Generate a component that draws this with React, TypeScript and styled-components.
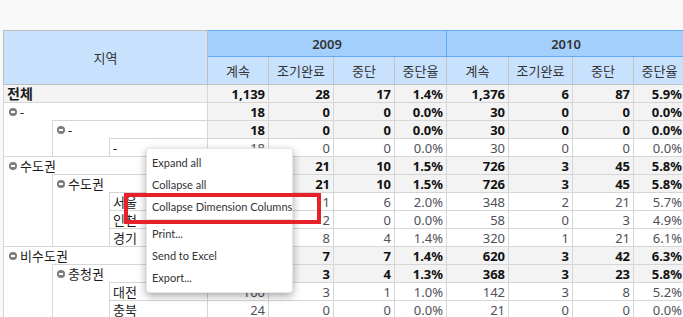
import React from 'react';
import styled, { createGlobalStyle, css } from 'styled-components';

const GlobalStyle = createGlobalStyle`
  html, body {
    margin: 0;
    padding: 0;
    background: #f8f8f8;
  }
  body {
    font-family: "Noto Sans", "Noto Sans CJK KR", sans-serif;
    overflow: hidden;
  }
`;

const Page = styled.div`
  position: relative;
  width: 683px;
  height: 317px;
  overflow: hidden;
  box-sizing: border-box;
  padding: 30px 0 0 3px;
`;

const PivotTable = styled.table`
  border-collapse: collapse;
  table-layout: fixed;
  width: 682px;
  font-size: 13px;
  background: #fff;
`;

const HeaderRow = styled.tr<{ $h: number }>`
  height: ${(p) => p.$h}px;
`;

const BodyRow = styled.tr`
  height: 18px;
`;

const headBase = css`
  padding: 0;
  font-weight: normal;
  color: #333;
  text-align: center;
  white-space: nowrap;
  line-height: 16px;
`;

const RegionHeader = styled.th`
  ${headBase};
  background: #c8e2fd;
  border: 1px solid #bdbdbd;
`;

const YearHeader = styled.th`
  ${headBase};
  background: #a3cffd;
  border: 1px solid #62aaf0;
  font-weight: 600;
`;

const MeasureHeader = styled.th`
  ${headBase};
  background: #c8e2fd;
  border: 1px solid #c3c3c3;
`;

const DimCell = styled.td<{ $total?: boolean; $pad: number }>`
  padding: 0 0 0 ${(p) => p.$pad}px;
  border: 1px solid #d6d6d6;
  background: ${(p) => (p.$total ? '#f3f3f3' : '#fff')};
  color: #1c1c1c;
  font-weight: ${(p) => (p.$total ? 'bold' : 'normal')};
  font-size: ${(p) => (p.$total ? '14px' : '13px')};
  line-height: 16px;
  white-space: nowrap;
  overflow: hidden;
`;

/* empty column under an expanded member; no rule on top so it joins its parent */
const SpacerCell = styled.td`
  padding: 0;
  border: 1px solid #d6d6d6;
  border-top-style: hidden;
  background: #fff;
`;

const ValueCell = styled.td<{ $sum?: boolean }>`
  padding: 0 3px 0 0;
  border: 1px solid #d6d6d6;
  text-align: right;
  line-height: 16px;
  white-space: nowrap;
  background: ${(p) => (p.$sum ? '#f3f3f3' : '#fff')};
  color: ${(p) => (p.$sum ? '#111' : '#505058')};
  font-weight: ${(p) => (p.$sum ? 'bold' : 'normal')};
`;

const Label = styled.span`
  display: inline-flex;
  align-items: center;
  gap: 3px;
`;

const CollapseIcon = styled.span`
  position: relative;
  display: inline-block;
  width: 8px;
  height: 8px;
  border-radius: 50%;
  background: #7b7b7b;
  &::after {
    content: '';
    position: absolute;
    left: 2px;
    top: 3px;
    width: 4px;
    height: 2px;
    background: #fff;
  }
`;

const ContextMenu = styled.div`
  position: absolute;
  left: 146px;
  top: 148px;
  width: 147px;
  box-sizing: border-box;
  padding: 3px 0;
  background: #fff;
  border: 1px solid rgba(0, 0, 0, 0.1);
  border-radius: 4px;
  box-shadow: 0 3px 8px rgba(0, 0, 0, 0.35);
  z-index: 2;
`;

const MenuItem = styled.div`
  height: 22px;
  line-height: 22px;
  padding: 0 5px;
  font-family: Lato, "Noto Sans", sans-serif;
  font-size: 11px;
  color: #333;
  white-space: nowrap;
`;

const MenuDivider = styled.div`
  height: 1px;
  margin: 1px 0 3px;
  background: #e2e2e2;
`;

const Highlight = styled.div`
  position: absolute;
  left: 124px;
  top: 193px;
  width: 197px;
  height: 31px;
  box-sizing: border-box;
  border: 4px solid #e8202a;
  z-index: 3;
`;

type Level = 0 | 1 | 2 | 3;

interface PivotRow {
  level: Level;
  label: string;
  spacers: number[]; // rowSpan of each empty column cell opened on this row
  values: string[];
}

const rows: PivotRow[] = [
  { level: 0, label: '전체', spacers: [], values: ['1,139', '28', '17', '1.4%', '1,376', '6', '87', '5.9%'] },
  { level: 1, label: '-', spacers: [], values: ['18', '0', '0', '0.0%', '30', '0', '0', '0.0%'] },
  { level: 2, label: '-', spacers: [2], values: ['18', '0', '0', '0.0%', '30', '0', '0', '0.0%'] },
  { level: 3, label: '-', spacers: [1], values: ['18', '0', '0', '0.0%', '30', '0', '0', '0.0%'] },
  { level: 1, label: '수도권', spacers: [], values: ['627', '21', '10', '1.5%', '726', '3', '45', '5.8%'] },
  { level: 2, label: '수도권', spacers: [4], values: ['627', '21', '10', '1.5%', '726', '3', '45', '5.8%'] },
  { level: 3, label: '서울', spacers: [3], values: ['283', '11', '6', '2.0%', '348', '2', '21', '5.7%'] },
  { level: 3, label: '인천', spacers: [], values: ['70', '2', '0', '0.0%', '58', '0', '3', '4.9%'] },
  { level: 3, label: '경기', spacers: [], values: ['274', '8', '4', '1.4%', '320', '1', '21', '6.1%'] },
  { level: 1, label: '비수도권', spacers: [], values: ['494', '7', '7', '1.4%', '620', '3', '42', '6.3%'] },
  { level: 2, label: '충청권', spacers: [3], values: ['301', '3', '4', '1.3%', '368', '3', '23', '5.8%'] },
  { level: 3, label: '대전', spacers: [2], values: ['100', '3', '1', '1.0%', '142', '3', '8', '5.2%'] },
  { level: 3, label: '충북', spacers: [], values: ['24', '0', '0', '0.0%', '21', '0', '0', '0.0%'] },
];

const columnWidths = [49, 57, 98, 61, 65, 61, 52, 62, 64, 61, 52];
const measures = ['계속', '조기완료', '중단', '중단율'];
const years = ['2009', '2010'];
const menuItems = ['Expand all', 'Collapse all', 'Collapse Dimension Columns'];
const menuItemsAfter = ['Print...', 'Send to Excel', 'Export...'];

const dimPadding: Record<Level, number> = { 0: 3, 1: 5, 2: 4, 3: 3 };

function DimensionLabel({ row }: { row: PivotRow }) {
  const span = row.level === 0 ? 3 : 4 - row.level;
  const expandable = row.level === 1 || row.level === 2;
  return (
    <DimCell colSpan={span} $total={row.level === 0} $pad={dimPadding[row.level]}>
      {expandable ? (
        <Label>
          <CollapseIcon />
          {row.label}
        </Label>
      ) : (
        row.label
      )}
    </DimCell>
  );
}

export default function App() {
  return (
    <>
      <GlobalStyle />
      <Page>
        <PivotTable>
          <colgroup>
            {columnWidths.map((w, i) => (
              <col key={i} style={{ width: w }} />
            ))}
          </colgroup>
          <thead>
            <HeaderRow $h={26}>
              <RegionHeader colSpan={3} rowSpan={2}>
                지역
              </RegionHeader>
              {years.map((y) => (
                <YearHeader key={y} colSpan={4}>
                  {y}
                </YearHeader>
              ))}
            </HeaderRow>
            <HeaderRow $h={28}>
              {years.flatMap((y) =>
                measures.map((m) => <MeasureHeader key={y + m}>{m}</MeasureHeader>)
              )}
            </HeaderRow>
          </thead>
          <tbody>
            {rows.map((row, i) => {
              const sum = row.level < 3;
              return (
                <BodyRow key={i}>
                  {row.spacers.map((rs, j) => (
                    <SpacerCell key={j} rowSpan={rs} />
                  ))}
                  <DimensionLabel row={row} />
                  {row.values.map((v, k) => (
                    <ValueCell key={k} $sum={sum}>
                      {v}
                    </ValueCell>
                  ))}
                </BodyRow>
              );
            })}
          </tbody>
        </PivotTable>

        <ContextMenu>
          {menuItems.map((t) => (
            <MenuItem key={t}>{t}</MenuItem>
          ))}
          <MenuDivider />
          {menuItemsAfter.map((t) => (
            <MenuItem key={t}>{t}</MenuItem>
          ))}
        </ContextMenu>
        <Highlight />
      </Page>
    </>
  );
}
